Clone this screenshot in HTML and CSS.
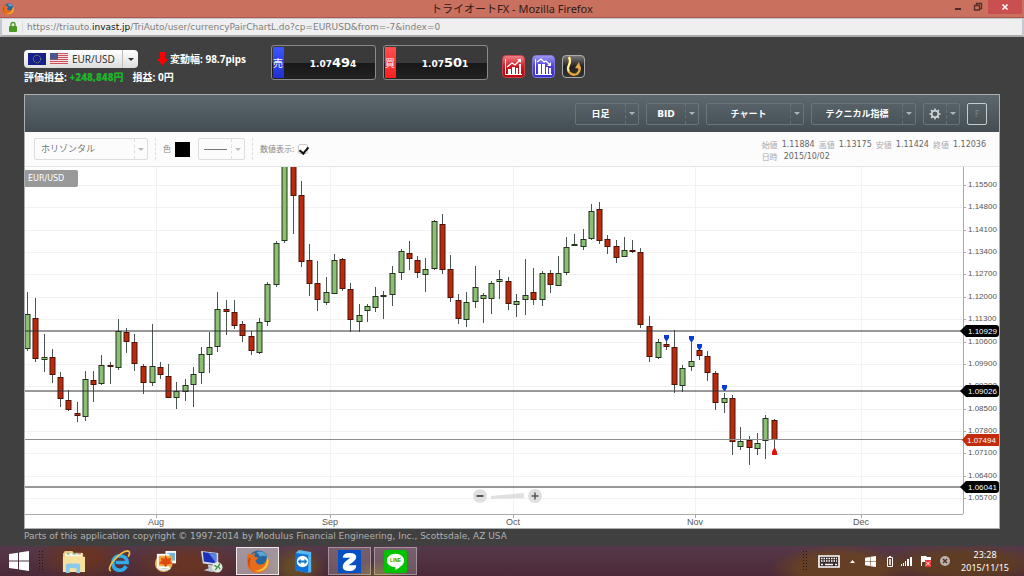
FILE: index.html
```html
<!DOCTYPE html>
<html lang="ja">
<head>
<meta charset="utf-8">
<title>トライオートFX</title>
<link rel="stylesheet" href="styles.css">
</head>
<body>
<header class="titlebar">
  <svg class="app-icon" viewBox="0 0 24 24"><use href="#firefox"/></svg>
  <h1 class="window-title">トライオートFX - Mozilla Firefox</h1>
  <div class="window-buttons">
    <button class="win-btn" aria-label="最小化"><svg width="20" height="14" viewBox="0 0 20 14"><rect x="7" y="8" width="6" height="2" fill="#472c28"/></svg></button>
    <button class="win-btn" aria-label="元に戻す"><svg width="20" height="14" viewBox="0 0 20 14" fill="none" stroke="#5b2d26"><path d="M8.500 5V3.500h5v5H12M6.500 5.500h5v4.500h-5z" stroke-width="1.300"/></svg></button>
    <button class="win-btn close" aria-label="閉じる"><svg width="20" height="14" viewBox="0 0 20 14" stroke="#fff" stroke-width="1.500"><path d="M7.500 4.500l5 5M12.500 4.500l-5 5"/></svg></button>
  </div>
</header>
<nav class="urlbar">
  <svg class="lock" width="10" height="12" viewBox="0 0 10 12"><path d="M3 6V3.500a2 2 0 0 1 4 0V6" fill="none" stroke="#4f9a2c" stroke-width="1.500"/><rect x="1" y="5" width="8" height="6" rx="1" fill="#4a9a24"/></svg>
  <div class="address">https://triauto.<span class="domain">invast.jp</span>/TriAuto/user/currencyPairChartL.do?cp=EURUSD&amp;from=-7&amp;index=0</div>
</nav>

<main class="page">
  <section class="summary">
    <div class="pair-info">
      <div class="info-row">
        <label class="pair">
          <svg class="flag" viewBox="0 0 18 12"><rect width="18" height="12" fill="#14218c"/><circle cx="9" cy="6" r="3.700" fill="none" stroke="#b5ac51" stroke-width="1" stroke-dasharray="1 .94"/></svg>
          <svg class="flag" viewBox="0 0 18 12"><rect width="18" height="12" fill="#f3dfe0"/><path d="M0 .5h18M0 2.500h18M0 4.500h18M0 6.500h18M0 8.500h18M0 10.500h18" stroke="#c9525c"/><rect width="8" height="6.500" fill="#4b568f"/></svg>
          <select aria-label="通貨ペア"><option>EUR/USD</option></select>
          <span class="pair-caret"></span>
        </label>
        <div class="range"><svg width="11" height="14" viewBox="0 0 11 14"><path d="M3 0h5v7h3l-5.500 6.500L0 7h3z" fill="#f00"/></svg>変動幅: 98.7pips</div>
      </div>
      <div class="info-row profit"><span>評価損益: <b class="gain">+248,848円</b></span><span>損益: 0円</span></div>
    </div>
    <button class="quote"><span class="side sell">売</span><span class="price">1.07<b>49</b>4</span></button>
    <button class="quote"><span class="side buy">買</span><span class="price">1.07<b>50</b>1</span></button>
    <div class="shortcuts">
      <button class="shortcut red" aria-label="買いチャート"><svg viewBox="0 0 21 21" fill="#fff"><path d="M2.500 3v15.500H19" fill="none" stroke="#fff"/><path d="M5 13h3v5H5zM9 11h3v7H9zM13 12h2v6h-2zM16 8h2v10h-2z"/><path d="M4 11l5-4 3 2 5-5" fill="none" stroke="#fff" stroke-width="1.300"/><path d="M14 3h4v4z"/></svg></button>
      <button class="shortcut blue" aria-label="売りチャート"><svg viewBox="0 0 21 21" fill="#fff"><path d="M2.500 3v15.500H19" fill="none" stroke="#fff"/><path d="M5 8h3v10H5zM9 8h3v10H9zM13 11h2v7h-2zM16 12h2v6h-2z"/><path d="M4 6l4-3 3 3 2-1 4 4" fill="none" stroke="#fff" stroke-width="1.300"/><path d="M14 10h4V6z"/></svg></button>
      <button class="shortcut dark" aria-label="フック"><svg viewBox="0 0 21 21" fill="none"><path d="M6 1q2 4 0 8-2 4 0 7 3 4 8 2 4-3 2-8" stroke="#e3a63a" stroke-width="2.400"/><path d="M6 1q2 4 0 8-2 4 0 6" stroke="#fff1a8" stroke-width="1.800"/><path d="M16 6l2 7-6-1z" fill="#e8aa45"/></svg></button>
    </div>
  </section>

  <section class="panel">
    <div class="toolbar">
      <label class="picker w-day"><select aria-label="足種"><option>日足</option></select><span class="caret"></span></label>
      <label class="picker w-bid"><select aria-label="価格"><option>BID</option></select><span class="caret"></span></label>
      <label class="picker w-chart"><select aria-label="チャート"><option>チャート</option></select><span class="caret"></span></label>
      <label class="picker w-tech"><select aria-label="テクニカル指標"><option>テクニカル指標</option></select><span class="caret"></span></label>
      <button class="picker w-gear" aria-label="設定"><svg class="gear" viewBox="0 0 14 14" fill="none" stroke="#d5dadc"><circle cx="7" cy="7" r="3.800" stroke-width="1.800"/><path d="M7 .5v2.500M7 11v2.500M.5 7H3M11 7h2.500M2.400 2.400l1.800 1.800M9.800 9.800l1.800 1.800M2.400 11.600l1.800-1.800M9.800 4.200l1.800-1.800" stroke-width="1.800"/></svg><span class="caret"></span></button>
      <button class="full">F</button>
    </div>
    <div class="drawbar">
      <label class="picker light w-shape"><select aria-label="描画ツール"><option>ホリゾンタル</option></select><span class="caret"></span></label>
      <div class="draw-group"><span>色</span><button class="swatch" aria-label="色"></button>
        <button class="picker light w-line" aria-label="線種"><span class="line-sample"></span><span class="caret"></span></button></div>
      <div class="draw-group"><label class="show-values" for="values">数値表示:</label><input class="check" id="values" type="checkbox" checked></div>
      <dl class="ohlc">
        <div><dt>始値</dt><dd>1.11884</dd><dt>高値</dt><dd>1.13175</dd><dt>安値</dt><dd>1.11424</dd><dt>終値</dt><dd>1.12036</dd></div>
        <div class="date"><dt>日時</dt><dd>2015/10/02</dd></div>
      </dl>
    </div>
    <div class="chart-area">
      <svg id="chart" class="chart" viewBox="25 167 974 361" role="img" aria-label="EUR/USD 日足チャート"></svg>
      <span class="pair-tag">EUR/USD</span>
      <div class="zoom">
        <button class="zoom-btn" aria-label="縮小"><svg width="14" height="14" viewBox="0 0 14 14"><path d="M3.500 7h7" stroke="#555" stroke-width="2"/></svg></button>
        <svg width="33" height="6" viewBox="0 0 33 6"><path d="M0 3L33 0v5L0 6z" fill="#e0e0e0"/></svg>
        <button class="zoom-btn" aria-label="拡大"><svg width="14" height="14" viewBox="0 0 14 14"><path d="M3.500 7h7M7 3.500v7" stroke="#555" stroke-width="1.500"/></svg></button>
      </div>
    </div>
  </section>
  <p class="copyright">Parts of this application copyright © 1997-2014 by Modulus Financial Engineering, Inc., Scottsdale, AZ USA</p>
</main>

<footer class="taskbar">
  <button class="start" aria-label="スタート"><svg width="20" height="20" viewBox="0 0 20 20"><use href="#windows"/></svg></button>
  <span class="grip"></span>
  <button class="task" aria-label="エクスプローラー"><svg viewBox="0 0 24 24"><path d="M1 4l2-3h8l1 2h10v20H1z" fill="#e9c979"/><path d="M3 3h18v4H3z" fill="#f8f6e6"/><path d="M5 4h3M11 4h4" stroke="#3a9a4f"/><path d="M16 4h4" stroke="#d4513e"/><path d="M1 7h23v16H1z" fill="#f7e29d"/><path d="M4 24v-8q0-2 2-2h11q2 0 2 2v8h-4v-5H8v5z" fill="#8cc9ec"/></svg></button>
  <button class="task" aria-label="Internet Explorer"><svg viewBox="0 0 24 24" fill="none"><path d="M19 17q-3 5-8 4-6-1-6-8 1-7 8-7 7 1 7 7H8" stroke="#32a9eb" stroke-width="3.800"/><path d="M3 22Q-1 20 6 11 15 1 21 1q3 1 0 6" stroke="#efc03c" stroke-width="1.800"/></svg></button>
  <button class="task" aria-label="フォト"><svg viewBox="0 0 24 24"><circle cx="10" cy="14" r="9" fill="#e6b66a"/><path d="M12 1h11v13H12z" fill="#f8f8f8"/><path d="M14 3h8v8h-8z" fill="#70b4df"/><path d="M3 4h13v15H3z" fill="#fff"/><path d="M5 6h14v11H5z" fill="#f3a83a"/><path d="M12 5l2 4 4-1-1 4 2 2-5 1-2 3-2-3-5-1 3-3-1-3 4 1z" fill="#e04a10"/><path d="M4 18q5 5 13 1" stroke="#dff0fa" stroke-width="2" fill="none"/></svg></button>
  <button class="task" aria-label="リモート デスクトップ"><svg viewBox="0 0 24 24"><path d="M1 1l18 2v13L3 14z" fill="#cfd7e7"/><path d="M3 2l14 2v10L4 12z" fill="#1b30b7"/><path d="M9 3l8 1v10z" fill="#5c83df"/><path d="M8 15l5 1 1 3 4 2-5 2-9-2 5-2z" fill="#bfc7d2"/><circle cx="18" cy="18" r="5.500" fill="#e3ebe0"/><path d="M15 16l3 2-2 3M21 14l-2 3 2 3" stroke="#3d8b3b" stroke-width="1.300" fill="none"/></svg></button>
  <button class="task open active" aria-label="Firefox"><svg viewBox="0 0 24 24"><use href="#firefox"/></svg></button>
  <button class="task" aria-label="TeamViewer"><svg viewBox="0 0 24 24"><path d="M4 3l3-3 13 2v21l-3 1-13-3z" fill="#58baf0"/><path d="M4 3l13 2v19L4 21z" fill="#0d72dc"/><circle cx="11" cy="12" r="6" fill="#fff"/><path d="M6 12l3-3v2h4V9l3 3-3 3v-2H9v2z" fill="#1678d1"/></svg></button>
  <button class="task open" aria-label="Z"><svg viewBox="0 0 24 24"><path d="M0 0h24v24H0z" fill="#0750c4"/><path d="M5 8q0-5 7-5 7 0 7 4 0 3-4 6l-4 3h8q0 6-7 6-8 0-7-5 0-3 4-6l4-3z" fill="#fff"/></svg></button>
  <button class="task open" aria-label="LINE"><svg viewBox="0 0 24 24"><rect width="24" height="24" rx="3" fill="#00c300"/><path d="M12 4c5 0 9 3 9 7 0 5-6 8-9 10v-3c-5 0-9-3-9-7s4-7 9-7z" fill="#fff"/><text x="12" y="13" class="line-logo">LINE</text></svg></button>
  <div class="tray">
    <span class="grip"></span>
    <svg class="keyboard" width="22" height="13" viewBox="0 0 22 13"><path d="M1 1h20v11H1z" fill="#3b2b2a" stroke="#fff" stroke-width="1.600"/><path d="M3 3.500h16M3 6h16" stroke="#fff" stroke-width="1.500" stroke-dasharray="1.500 1"/><path d="M3 9.500h2M7 9.500h8M17 9.500h2" stroke="#fff" stroke-width="1.500"/></svg>
    <svg class="up" width="5" height="3" viewBox="0 0 5 3"><path d="M0 3l2.500-3L5 3z" fill="#fff"/></svg>
    <svg width="11" height="11" viewBox="0 0 20 20"><use href="#windows"/></svg>
    <svg class="battery" width="6" height="11" viewBox="0 0 6 11"><path d="M.5 1.500h5v9h-5zM2 .5h2" fill="none" stroke="#fff"/><path d="M2 3h2v6H2z" fill="#d8cbc7"/></svg>
    <svg width="11" height="10" viewBox="0 0 11 10" fill="#fff"><path d="M0 8h1v2H0zM2 7h1v3H2zM4 5h1v5H4zM6 3h2v7H6zM9 1h2v9H9z"/></svg>
    <svg width="12" height="12" viewBox="0 0 12 12"><path d="M1.500 1v10" stroke="#fff"/><path d="M2 1h4l1 1h4v5H2z" fill="#fff"/><rect x="5" y="5" width="6" height="7" fill="#e33"/><path d="M6 6.500l4 4M10 6.500l-4 4" stroke="#fff"/></svg>
    <svg width="10" height="10" viewBox="0 0 10 10"><circle cx="5" cy="5" r="5" fill="#bdb3ac"/><path d="M3 3l4 4M7 3L3 7" stroke="#4b3330" stroke-width="1.500"/></svg>
    <time class="clock">23:28<br>2015/11/15</time>
  </div>
</footer>

<svg class="symbols" width="0" height="0">
  <symbol id="windows" viewBox="0 0 20 20"><path d="M0 3l9-1.300V9.500H0zM10 1.500L20 0v9.500H10zM0 10.500h9v7.800L0 17zM10 10.500h10V20l-10-1.500z" fill="#fff"/></symbol>
  <symbol id="firefox" viewBox="0 0 24 24"><circle cx="13" cy="11" r="10.500" fill="#28659f"/><path d="M11 2q8-2 11 5-5-2-7 0-2-3-4-5z" fill="#58a8d2"/><path d="M2 3q1 2 3 2 2-2 5-2-2 2-1 4l4 1-3 3q1 5 6 4 5-1 6-7 4 5 0 11-5 6-12 5Q1 22 1 12 1 7 2 3z" fill="#e56c1d"/><path d="M22 6q4 7-1 13-5 5-12 3 8-1 11-6 2-4 2-10z" fill="#f5c237"/><path d="M3 8q-3 8 4 13Q1 16 5 9z" fill="#c23d17"/></symbol>
</svg>
<script src="chart.js"></script>
</body>
</html>
```

FILE: styles.css
```css
* { box-sizing: border-box; }
body {
  margin: 0;
  min-height: 100vh;
  display: flex;
  flex-direction: column;
  background: #404040;
  font: 10px/14px "Noto Sans", "Noto Sans CJK JP", sans-serif;
  color: #fff;
}
button, select { font: inherit; color: inherit; margin: 0; padding: 0; border: 0; background: none; }
select { appearance: none; min-width: 0; outline: 0; }
svg { display: block; flex: none; }
.symbols { position: absolute; }

/* window chrome */
.titlebar {
  display: grid;
  grid-template-columns: 80px 1fr 80px;
  align-items: center;
  height: 18px;
  background: #c9705e;
  border-bottom: 1px solid #a9584b;
}
.app-icon { width: 12px; height: 12px; margin-left: 2px; }
.window-title { margin: 0; font-size: 11px; line-height: 16px; font-weight: 400; text-align: center; color: #301c18; }
.window-buttons { display: flex; justify-content: flex-end; align-self: start; padding-right: 2px; }
.win-btn { width: 20px; height: 14px; }
.close { width: 34px; display: flex; justify-content: center; background: #c94f51; }
.urlbar {
  display: flex;
  align-items: center;
  gap: 4px;
  height: 19px;
  padding-left: 6px;
  background: #efefef;
  border: 1px solid #c5c8d2;
  border-width: 1px 2px 2px;
  border-bottom-color: #a9a9a9;
}
.address { padding-left: 4px; border-left: 1px solid #ddd; font: 9px/12px "DejaVu Sans", sans-serif; color: #808080; }
.domain { color: #111; }

/* page */
.page { flex: 1; padding: 8px 24px 0; }
.summary { display: flex; align-items: flex-start; height: 49px; }
.pair-info { width: 247px; padding-top: 5px; font-weight: 700; white-space: nowrap; }
.info-row { display: flex; align-items: center; gap: 19px; }
.pair {
  display: flex;
  align-items: center;
  gap: 4px;
  width: 114px;
  height: 18px;
  padding-left: 4px;
  border-radius: 4px;
  background: linear-gradient(#fff, #ddd);
  color: #333;
  font-weight: 400;
}
.pair select { flex: 1; }
.flag { width: 18px; height: 12px; }
.pair-caret { display: grid; place-items: center; width: 16px; height: 18px; border-left: 1px solid #bbb; }
.pair-caret::after { content: ""; border: 3px solid transparent; border-top-color: #333; border-bottom: 0; }
.range { display: flex; align-items: center; gap: 2px; }
.profit { gap: 9px; padding-top: 2px; line-height: 14px; }
.gain { color: #1fb52b; }
.quote {
  display: flex;
  width: 105px;
  height: 35px;
  margin-right: 7px;
  padding: 1px;
  border: 1px solid #8a8a8a;
  border-radius: 3px;
  background: linear-gradient(#3a3a3a 0 50%, #181818 50%, #222);
}
.side { display: flex; align-items: center; width: 11px; height: 31px; }
.sell { background: linear-gradient(#3d55ff, #2030d0); }
.buy { background: linear-gradient(#ff4f4f, #fb2020); }
.price { flex: 1; align-self: center; padding: 2px 0 0 8px; text-align: center; font: 700 9px/18px "DejaVu Sans", sans-serif; }
.price b { font-size: 13px; }
.shortcuts { display: flex; gap: 7px; padding: 10px 7px; }
.shortcut { width: 23px; height: 23px; border-radius: 4px; border: 1px solid #999; }
.red { background: linear-gradient(#ec8086, #d01823 50%, #b90009); border-color: #cc434d; }
.blue { background: linear-gradient(#9c98f2, #4a40d8 50%, #3c2fc7); border-color: #7f78dc; }
.dark { background: linear-gradient(#777, #222 50%, #333); border-color: #aaa; }

/* chart panel */
.panel { border: 1px solid #aaafb1; background: #fff; }
.toolbar {
  display: flex;
  justify-content: flex-end;
  align-items: center;
  gap: 7px;
  height: 37px;
  padding-right: 12px;
  background: linear-gradient(#5d686e, #434d52);
  font-size: 9px;
  font-weight: 700;
}
.picker {
  display: flex;
  align-items: center;
  height: 22px;
  border: 1px solid #69747a;
  border-radius: 2px;
}
.picker select { flex: 1; text-align-last: center; }
.caret { flex: none; display: grid; place-items: center; width: 13px; height: 20px; border-left: 1px dashed #69747a; }
.caret::after { content: ""; border: 3px solid transparent; border-top-color: #adb5b8; border-bottom: 0; }
.w-day { width: 64px; }
.w-bid { width: 53px; font-family: "DejaVu Sans", sans-serif; }
.w-chart { width: 98px; }
.w-tech { width: 105px; }
.w-gear { width: 37px; }
.gear { width: 12px; height: 12px; margin: auto; }
.full { width: 20px; height: 22px; border: 1px solid #c5cbcd; border-radius: 2px; color: #7a8488; font-weight: 400; }
.drawbar {
  display: flex;
  align-items: center;
  gap: 7px;
  height: 35px;
  padding: 0 13px 0 9px;
  border-bottom: 1px solid #e5e5e5;
  background: #fcfcfc;
  color: #888;
  font-size: 9px;
}
.light { border-color: #ddd; color: #777; }
.light .caret { border-color: #ddd; }
.light .caret::after { border-top-color: #bbb; }
.w-shape { width: 114px; }
.w-shape select { padding-left: 6px; text-align-last: left; }
.draw-group { display: flex; align-items: center; gap: 4px; height: 22px; padding-left: 7px; border-left: 1px dashed #ddd; font-size: 8px; }
.swatch { width: 15px; height: 15px; background: #000; }
.w-line { width: 47px; margin-left: 4px; }
.line-sample { width: 23px; height: 1px; margin: auto; background: #777; }
.check {
  appearance: none;
  width: 10px;
  height: 10px;
  margin: 0;
  border: 1px solid #ccc;
  border-radius: 2px;
  background: #fff;
}
.check:checked::after { content: ""; display: block; width: 4px; height: 7px; margin: 0 2px; border: solid #111; border-width: 0 2px 2px 0; rotate: 40deg; }
.ohlc { margin: 0 0 0 auto; padding-top: 4px; font-size: 8px; line-height: 12px; }
.ohlc div { display: flex; gap: 4px; }
.ohlc .date { gap: 6px; }
.ohlc dt { color: #aaa; }
.ohlc dd { margin: 0; color: #666; font-family: "DejaVu Sans", sans-serif; }
.chart-area { position: relative; }
.chart { width: 100%; height: auto; }
.pair-tag {
  position: absolute;
  top: 3px;
  left: 0;
  padding: 2px 14px 2px 3px;
  border-radius: 0 2px 2px 0;
  background: #999;
  font-size: 8px;
  line-height: 13px;
  font-family: "DejaVu Sans", sans-serif;
}
.zoom { position: absolute; left: 46%; bottom: 25px; display: flex; align-items: center; gap: 4px; }
.zoom-btn { width: 14px; height: 14px; border-radius: 50%; background: #e0e0e0; }
.copyright { margin: 0; font: 9px/15px "DejaVu Sans", sans-serif; color: #b0b0b0; }

/* chart drawing */
.grid { stroke: #f2f2f2; }
.axis { stroke: #aaa; }
.level { stroke: #333; stroke-width: 1; }
.level-now { stroke: #8b8f8b; }
.axis-text { font: 8px "Liberation Sans", sans-serif; fill: #555; }
.month-text { font: 9px "Liberation Sans", sans-serif; fill: #555; text-anchor: middle; }
.level-text { font: 8px "Liberation Sans", sans-serif; fill: #fff; }
.wick { stroke: #4b5553; }
.up-body { fill: #8bbf73; stroke: #22351d; }
.down-body { fill: #b92b0c; stroke: #4a1408; }
.sell-mark { fill: #0b3bd0; }
.buy-mark { fill: #e01208; }
.tag { fill: #000; }
.tag-now { fill: #c22c0b; }

/* taskbar */
.taskbar {
  display: flex;
  align-items: center;
  height: 30px;
  background:
    radial-gradient(ellipse 70px 24px at 82% 75%, #6b431fcc 60%, transparent),
    radial-gradient(ellipse 90px 20px at 94% 60%, #62401dcc 50%, transparent),
    radial-gradient(ellipse 30px 22px at 29% 70%, #6c5222cc 30%, transparent),
    radial-gradient(ellipse 30px 16px at 37% 100%, #6c5222cc 30%, transparent),
    radial-gradient(ellipse 60px 24px at 18% 60%, #6d351fcc 30%, transparent),
    radial-gradient(ellipse 50px 24px at 8% 40%, #6d341bcc 30%, transparent),
    linear-gradient(#55394a, #4b2938);
}
.start { width: 20px; margin-left: 9px; }
.grip { width: 6px; height: 22px; margin: 0 8px 0 9px; background: radial-gradient(circle, #21151a 1px, transparent 1px) 0 0 / 3px 3px; }
.task { display: grid; place-items: center; width: 43px; height: 28px; margin-right: 3px; border: 1px solid transparent; }
.task svg { width: 23px; height: 23px; }
.open { background: #ffffff33; border-color: #ffffff55; }
.active { background: #ffffff77; border-color: #ffffffcc; }
.line-logo { font: 700 5px "Liberation Sans", sans-serif; text-anchor: middle; fill: #00a800; }
.tray { display: flex; align-items: center; gap: 8px; margin-left: auto; padding-right: 15px; }
.tray .grip { margin: 0 2px 0 0; }
.up { margin: 0 2px; }
.battery { margin-left: 3px; }
.clock { margin-left: 3px; font-size: 9px; line-height: 13px; text-align: center; }
```

FILE: chart.js
```js
// Each candle: [x, high, body top, body bottom, low, rising]
const candles = [
  [27,292,314,349,351,1],[35,298,318,359,362,0],[44,334,357,360,372,1],[52,349,357,375,383,0],
  [60,372,377,399,407,0],[68,390,400,410,411,0],[77,402,413,416,422,0],[85,371,379,417,421,1],
  [93,371,380,385,402,0],[101,355,365,384,385,1],[110,362,365,367,384,0],[118,319,331,368,370,1],
  [126,328,332,342,353,0],[134,334,342,364,371,0],[143,364,366,383,394,0],[152,324,366,383,386,1],
  [160,362,367,375,379,0],[168,364,376,398,398,0],[176,382,391,398,409,1],[185,379,385,392,401,1],
  [193,367,374,385,407,1],[201,347,354,373,384,1],[209,332,347,355,373,1],[217,292,309,347,352,1],
  [226,300,309,312,335,0],[234,300,312,326,329,0],[242,321,324,336,342,0],[251,331,336,351,355,0],
  [259,318,322,353,354,1],[267,282,284,322,326,1],[276,241,243,285,287,1],[284,160,160,241,243,1],
  [293,160,160,196,234,0],[301,181,195,262,267,0],[309,244,260,284,296,0],[317,261,283,300,311,0],
  [326,277,292,303,305,1],[334,254,260,294,294,1],[342,258,259,289,291,0],[350,283,289,320,332,0],
  [359,304,315,322,332,1],[367,304,306,311,322,1],[375,287,296,308,312,1],[383,291,295,297,319,1],
  [392,266,273,295,306,1],[401,249,251,273,280,1],[409,241,253,259,270,0],[417,256,260,273,278,0],
  [425,258,269,275,292,1],[434,220,221,269,270,1],[442,214,224,270,274,0],[450,255,269,298,302,0],
  [458,294,300,319,324,0],[466,292,302,320,327,1],[475,266,287,302,308,1],[483,293,295,299,323,1],
  [491,281,283,299,314,1],[499,270,279,282,299,1],[508,277,281,304,310,0],[516,294,301,305,317,1],
  [525,259,295,300,315,1],[533,268,292,300,305,0],[542,271,273,300,306,1],[550,270,273,285,293,0],
  [558,256,273,286,286,1],[566,237,247,273,275,1],[574,234,244,246,246,1],[583,229,239,247,250,1],
  [591,204,211,239,240,1],[599,202,209,241,244,0],[607,235,239,247,254,0],[616,240,246,258,263,0],
  [624,237,250,257,257,1],[632,240,250,252,253,0],[640,248,252,325,328,0],[649,316,326,357,362,0],
  [658,339,342,358,359,1],[666,340,344,347,350,0],[674,330,347,385,393,0],[682,365,368,386,392,1],
  [691,341,361,367,371,1],[699,348,350,356,360,0],[707,351,356,373,381,0],[715,371,373,403,410,0],
  [724,393,398,403,413,1],[732,395,398,442,455,0],[740,427,441,447,450,1],[749,436,440,448,465,0],
  [757,433,443,449,455,1],[765,415,418,441,459,1],[774,419,420,440,450,0]
];
const months = [[156,'Aug'],[330,'Sep'],[513,'Oct'],[695,'Nov'],[861,'Dec']];
const levels = [[331,'1.10929'],[391,'1.09026'],[487,'1.06041']];
const sells = [[666,335],[691,336],[699,344],[724,385]];
const right = 963, bottom = 514;

const line = (cls, x1, y1, x2, y2) => `<path class="${cls}" d="M${x1} ${y1}L${x2} ${y2}"/>`;
const text = (cls, x, y, s) => `<text class="${cls}" x="${x}" y="${y}">${s}</text>`;
let out = '';

for (let i = 0; i < 15; i++) {
  const y = Math.round(185 + i * 22.36) + 0.5;
  out += line('grid', 25, y, right, y) + line('axis', right, y, right + 3, y)
    + text('axis-text', 968, y + 1, (1.155 - i * 0.007).toFixed(5));
}
for (const [x, name] of months) {
  out += line('grid', x + 0.5, 167, x + 0.5, bottom) + line('axis', x + 0.5, bottom, x + 0.5, bottom + 4)
    + text('month-text', x, 525, name);
}
out += line('axis', right + 0.5, 167, right + 0.5, bottom) + line('axis', 25, bottom + 0.5, right, bottom + 0.5);
for (const [x, high, top, base, low, rising] of candles) {
  out += line('wick', x + 0.5, high, x + 0.5, low)
    + `<rect class="${rising ? 'up-body' : 'down-body'}" x="${x - 2}" y="${top + 0.5}" width="5" height="${Math.max(base - top - 1, 1)}"/>`;
}
out += line('level-now', 25, 439.5, right, 439.5)
  + '<path class="tag-now" d="M962 440l5-6h32v12h-32z"/>' + text('level-text', 967, 443, '1.07494');
for (const [y, label] of levels) {
  out += line('level', 25, y, right, y)
    + `<path class="tag" d="M960 ${y}l6-6h30q3 0 3 3v6q0 3-3 3h-30z"/>` + text('level-text', 968, y + 3, label);
}
for (const [x, y] of sells) {
  out += `<path class="sell-mark" d="M${x - 2} ${y}h5v3l-2 3h-1l-2-3z"/>`;
}
out += '<path class="buy-mark" d="M772 455v-3l2-4h1l2 4v3z"/>';
document.getElementById('chart').innerHTML = out;
```
